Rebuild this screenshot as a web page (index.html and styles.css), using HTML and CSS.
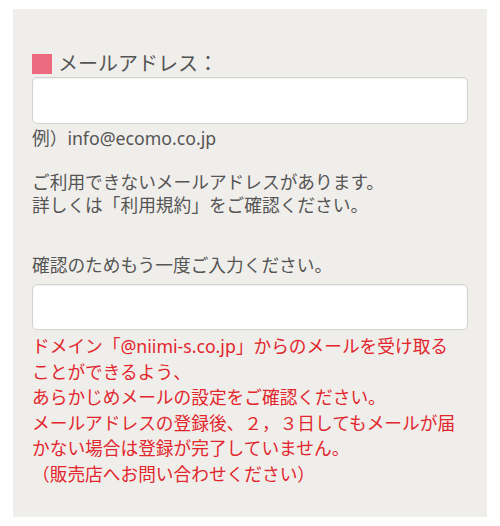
FILE: index.html
```html
<!DOCTYPE html>
<html lang="ja">
<head>
<meta charset="utf-8">
<link rel="stylesheet" href="styles.css">
</head>
<body>
<div class="panel">
  <div class="label"><span class="mark"></span><span>メールアドレス：</span></div>
  <div class="field"></div>
  <p class="example">例）info@ecomo.co.jp</p>
  <p class="note">ご利用できないメールアドレスがあります。<br>詳しくは「利用規約」をご確認ください。</p>
  <p class="confirm">確認のためもう一度ご入力ください。</p>
  <div class="field field2"></div>
  <p class="warn">ドメイン「@niimi-s.co.jp」からのメールを受け取る<br>ことができるよう、<br>あらかじめメールの設定をご確認ください。<br>メールアドレスの登録後、２，３日してもメールが届<br>かない場合は登録が完了していません。<br>（販売店へお問い合わせください）</p>
</div>
</body>
</html>
```

FILE: styles.css
```css
html, body {
  margin: 0;
  padding: 0;
  background: #ffffff;
}
body {
  font-family: "Noto Sans", "Noto Sans CJK JP", sans-serif;
  color: #555555;
}
.panel {
  margin: 9px 13px;
  height: 508px;
  box-sizing: border-box;
  background: #f0eeea;
  padding: 42px 19px 0 19px;
}
.label {
  display: flex;
  align-items: center;
  height: 26px;
  font-size: 20px;
  line-height: 26px;
  color: #555555;
}
.mark {
  width: 20px;
  height: 20px;
  background: #ee6a7f;
  margin-right: 6px;
}
.field {
  height: 47px;
  box-sizing: border-box;
  background: #ffffff;
  border: 1px solid #d2d2d2;
  border-radius: 5px;
  box-shadow: inset 0 1px 2px rgba(0,0,0,0.06);
}
.field2 {
  height: 46px;
  margin-top: 7px;
}
p {
  margin: 0;
  font-size: 17.7px;
  line-height: 23px;
  white-space: nowrap;
}
.example {
  margin-top: 3px;
}
.note {
  margin-top: 21px;
}
.confirm {
  margin-top: 37px;
}
.warn {
  margin-top: 4px;
  color: #e2262d;
  line-height: 25.6px;
}
```
